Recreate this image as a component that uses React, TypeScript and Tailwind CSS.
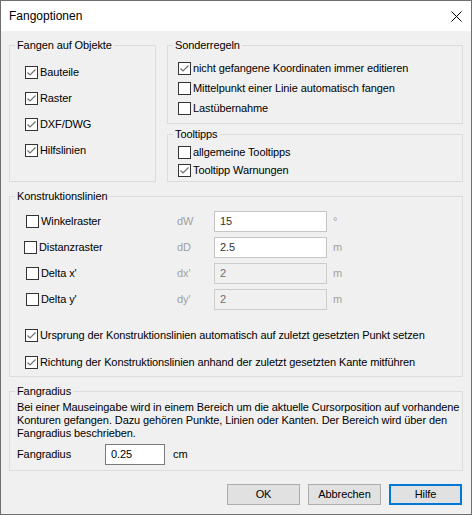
import React from "react";
import clsx from "clsx";

function CheckBox({ checked }: { checked?: boolean }) {
  return (
    <span className="flex h-[13px] w-[13px] shrink-0 items-center justify-center border border-[#333333] bg-white">
      {checked && (
        <svg width="11" height="11" viewBox="0 0 11 11">
          <path d="M1.5 5.5 L4 8 L9.5 2.5" fill="none" stroke="#707070" strokeWidth="1.2" />
        </svg>
      )}
    </span>
  );
}

function Check({ label, checked, className }: { label: string; checked?: boolean; className?: string }) {
  return (
    <label className={clsx("flex items-center gap-[2px]", className)}>
      <CheckBox checked={checked} />
      <span className="whitespace-nowrap">{label}</span>
    </label>
  );
}

function Group({ title, className, children }: { title: string; className?: string; children: React.ReactNode }) {
  return (
    <fieldset className={clsx("min-w-0 border border-[#dcdcdc]", className)}>
      <legend className="ml-[5px] px-[2px] leading-[13px]">{title}</legend>
      {children}
    </fieldset>
  );
}

function Field({ value, disabled }: { value: string; disabled?: boolean }) {
  return (
    <div
      className={clsx(
        "flex h-[21px] w-[113px] items-center border px-[5px]",
        disabled ? "border-[#cccccc] bg-[#f0f0f0] text-[#6d6d6d]" : "border-[#c5c5c5] bg-white text-[#333333]"
      )}
    >
      {value}
    </div>
  );
}

const rows = [
  { label: "Winkelraster", short: "dW", value: "15", unit: "°" },
  { label: "Distanzraster", short: "dD", value: "2.5", unit: "m", shift: true },
  { label: "Delta x'", short: "dx'", value: "2", unit: "m", disabled: true },
  { label: "Delta y'", short: "dy'", value: "2", unit: "m", disabled: true },
];

export default function App() {
  return (
    <div className="flex h-[515px] w-[472px] flex-col border border-[#6e6e6e] bg-[#f0f0f0] font-['Liberation_Sans',Arial,sans-serif] text-[11px] leading-[13px] tracking-[-0.1px] text-black">
      {/* Title bar */}
      <div className="flex h-[30px] shrink-0 items-center justify-between bg-white pl-[8px] pr-[9px]">
        <span className="text-[12px] tracking-normal">Fangoptionen</span>
        <svg width="11" height="11" viewBox="0 0 11 11">
          <path d="M0.5 0.5 L10.5 10.5 M10.5 0.5 L0.5 10.5" stroke="#000" strokeWidth="1" />
        </svg>
      </div>

      <div className="flex flex-col px-[8px] pt-[8px] pb-[9px]">
        {/* Top row */}
        <div className="flex gap-[11px]">
          <Group title="Fangen auf Objekte" className="w-[147px] pb-[18px]">
            <div className="flex flex-col pt-[7px] pl-[15px]">
              <Check label="Bauteile" checked className="h-[26px]" />
              <Check label="Raster" checked className="h-[26px]" />
              <Check label="DXF/DWG" checked className="h-[26px]" />
              <Check label="Hilfslinien" checked className="h-[26px]" />
            </div>
          </Group>
          <div className="flex flex-1 flex-col gap-[4px]">
            <Group title="Sonderregeln" className="pb-[5px]">
              <div className="flex flex-col pt-[6px] pl-[10px]">
                <Check label="nicht gefangene Koordinaten immer editieren" checked className="h-[20px]" />
                <Check label="Mittelpunkt einer Linie automatisch fangen" className="h-[20px]" />
                <Check label="Lastübernahme" className="h-[20px]" />
              </div>
            </Group>
            <Group title="Tooltipps" className="pb-[2px]">
              <div className="flex flex-col pt-[2px] pl-[10px]">
                <Check label="allgemeine Tooltipps" className="h-[18px]" />
                <Check label="Tooltipp Warnungen" checked className="h-[18px]" />
              </div>
            </Group>
          </div>
        </div>

        {/* Konstruktionslinien */}
        <Group title="Konstruktionslinien" className="mt-[8px] pb-[2px]">
          <div className="flex flex-col pt-[5px] pl-[16px]">
            {rows.map((r) => (
              <div key={r.label} className="flex h-[26px] items-center">
                <Check label={r.label} className={clsx("w-[151px]", r.shift && "-ml-[2px] mr-[2px]")} />
                <span className="w-[37px] text-[#a0a0a0]">{r.short}</span>
                <Field value={r.value} disabled={r.disabled} />
                <span className="ml-[6px] text-[#a0a0a0]">{r.unit}</span>
              </div>
            ))}
            <Check
              label="Ursprung der Konstruktionslinien automatisch auf zuletzt gesetzten Punkt setzen"
              checked
              className="mt-[11px] h-[24px] -ml-[1px]"
            />
            <Check
              label="Richtung der Konstruktionslinien anhand der zuletzt gesetzten Kante mitführen"
              checked
              className="mt-[3px] h-[24px] -ml-[1px]"
            />
          </div>
        </Group>

        {/* Fangradius */}
        <Group title="Fangradius" className="mt-[8px] pb-[5px]">
          <div className="flex flex-col pt-[3px] pl-[7px]">
            <p className="whitespace-nowrap">
              Bei einer Mauseingabe wird in einem Bereich um die aktuelle Cursorposition auf vorhandene
              <br />
              Konturen gefangen. Dazu gehören Punkte, Linien oder Kanten. Der Bereich wird über den
              <br />
              Fangradius beschrieben.
            </p>
            <div className="mt-[4px] flex h-[21px] items-center">
              <span className="w-[88px]">Fangradius</span>
              <div className="flex h-[21px] w-[60px] items-center border border-[#7a7a7a] bg-white px-[5px]">0.25</div>
              <span className="ml-[8px]">cm</span>
            </div>
          </div>
        </Group>

        {/* Buttons */}
        <div className="mt-[13px] flex justify-end gap-[8px] pr-[1px]">
          <button className="h-[21px] w-[73px] border border-[#adadad] bg-[#e1e1e1]">OK</button>
          <button className="h-[21px] w-[73px] border border-[#adadad] bg-[#e1e1e1]">Abbrechen</button>
          <button className="h-[21px] w-[73px] border-2 border-[#0078d7] bg-[#e1e1e1]">Hilfe</button>
        </div>
      </div>
    </div>
  );
}
